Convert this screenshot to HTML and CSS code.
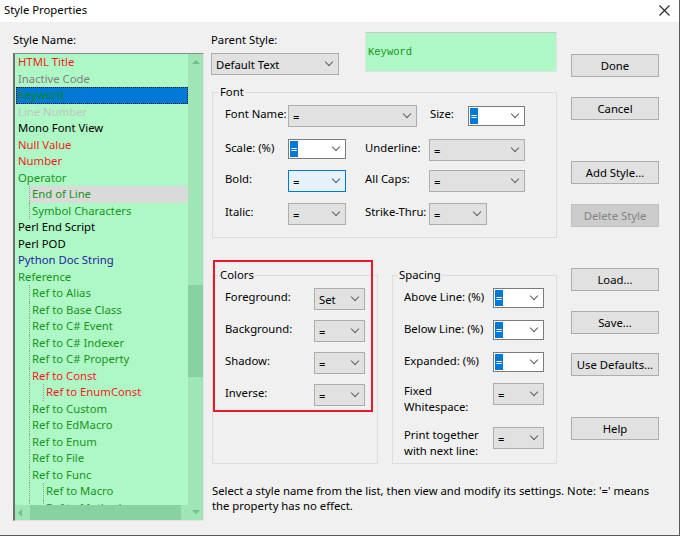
FILE: index.html
```html
<!DOCTYPE html>
<html lang="en">
<head>
  <meta charset="UTF-8">
  <title>Style Properties</title>
  <link rel="stylesheet" href="styles.css">
</head>
<body>
  <div class="dialog">
    <div class="titlebar">
      <span class="title">Style Properties</span>
      <svg class="close" width="11" height="11" viewBox="0 0 11 11">
        <path d="M0.5 0.5 L10.5 10.5 M10.5 0.5 L0.5 10.5" stroke="#222" stroke-width="1.1" fill="none"/>
      </svg>
    </div>

    <div class="main">
      <div class="left">
        <div class="lbl">Style Name:</div>
        <div class="list">
          <div class="items">
            <div class="item red">HTML Title</div>
            <div class="item gray">Inactive Code</div>
            <div class="item green selected">Keyword</div>
            <div class="item light">Line Number</div>
            <div class="item">Mono Font View</div>
            <div class="item red">Null Value</div>
            <div class="item red">Number</div>
            <div class="item green">Operator</div>
            <div class="item green lv1 inactive-sel">End of Line</div>
            <div class="item green lv1">Symbol Characters</div>
            <div class="item">Perl End Script</div>
            <div class="item">Perl POD</div>
            <div class="item blue">Python Doc String</div>
            <div class="item green">Reference</div>
            <div class="item green lv1">Ref to Alias</div>
            <div class="item green lv1">Ref to Base Class</div>
            <div class="item green lv1">Ref to C# Event</div>
            <div class="item green lv1">Ref to C# Indexer</div>
            <div class="item green lv1">Ref to C# Property</div>
            <div class="item red lv1">Ref to Const</div>
            <div class="item red lv2">Ref to EnumConst</div>
            <div class="item green lv1">Ref to Custom</div>
            <div class="item green lv1">Ref to EdMacro</div>
            <div class="item green lv1">Ref to Enum</div>
            <div class="item green lv1">Ref to File</div>
            <div class="item green lv1">Ref to Func</div>
            <div class="item green lv2">Ref to Macro</div>
            <div class="item green lv2">Ref to Method</div>
          </div>
          <div class="vscroll">
            <span class="arrow-up"></span>
            <div class="vthumb"></div>
            <span class="arrow-down"></span>
          </div>
          <div class="hscroll">
            <span class="arrow-left"></span>
            <div class="hthumb"></div>
          </div>
        </div>
      </div>

      <div class="right">
        <div class="right-top">
          <div class="mid">
            <div class="top-row">
              <div class="parent">
                <div class="lbl">Parent Style:</div>
                <div class="combo"><span>Default Text</span></div>
              </div>
              <div class="preview">Keyword</div>
            </div>

            <fieldset class="group font-group">
              <legend>Font</legend>
              <div class="frow r1">
                <span class="flabel">Font Name:</span>
                <div class="combo name-combo"><span>=</span></div>
                <span class="flabel size-label">Size:</span>
                <div class="combo white size-combo"><span class="hl">=</span></div>
              </div>
              <div class="frow r2">
                <span class="flabel">Scale: (%)</span>
                <div class="combo white small"><span class="hl">=</span></div>
                <span class="flabel flabel2">Underline:</span>
                <div class="combo wide"><span>=</span></div>
              </div>
              <div class="frow r3">
                <span class="flabel">Bold:</span>
                <div class="combo focus small"><span>=</span></div>
                <span class="flabel flabel2">All Caps:</span>
                <div class="combo wide"><span>=</span></div>
              </div>
              <div class="frow">
                <span class="flabel">Italic:</span>
                <div class="combo small"><span>=</span></div>
                <span class="flabel flabel2">Strike-Thru:</span>
                <div class="combo small"><span>=</span></div>
              </div>
            </fieldset>

            <div class="lower">
              <div class="colors-wrap">
                <fieldset class="group colors-group">
                  <legend>Colors</legend>
                  <div class="crow">
                    <span class="clabel">Foreground:</span>
                    <div class="combo ccombo"><span>Set</span></div>
                  </div>
                  <div class="crow">
                    <span class="clabel">Background:</span>
                    <div class="combo ccombo"><span>=</span></div>
                  </div>
                  <div class="crow">
                    <span class="clabel">Shadow:</span>
                    <div class="combo ccombo"><span>=</span></div>
                  </div>
                  <div class="crow">
                    <span class="clabel">Inverse:</span>
                    <div class="combo ccombo"><span>=</span></div>
                  </div>
                </fieldset>
                <div class="highlight"></div>
              </div>

              <fieldset class="group spacing-group">
                <legend>Spacing</legend>
                <div class="srow">
                  <span class="clabel">Above Line: (%)</span>
                  <div class="combo white ccombo"><span class="hl">=</span></div>
                </div>
                <div class="srow">
                  <span class="clabel">Below Line: (%)</span>
                  <div class="combo white ccombo"><span class="hl">=</span></div>
                </div>
                <div class="srow">
                  <span class="clabel">Expanded: (%)</span>
                  <div class="combo white ccombo"><span class="hl">=</span></div>
                </div>
                <div class="srow two">
                  <span class="clabel">Fixed<br>Whitespace:</span>
                  <div class="combo ccombo"><span>=</span></div>
                </div>
                <div class="srow two last">
                  <span class="clabel">Print together<br>with next line:</span>
                  <div class="combo ccombo"><span>=</span></div>
                </div>
              </fieldset>
            </div>
          </div>

          <div class="buttons">
            <button class="btn b-done">Done</button>
            <button class="btn b-near">Cancel</button>
            <button class="btn b-far">Add Style...</button>
            <button class="btn b-near" disabled>Delete Style</button>
            <button class="btn b-far">Load...</button>
            <button class="btn b-near">Save...</button>
            <button class="btn b-tight">Use Defaults...</button>
            <button class="btn b-far">Help</button>
          </div>
        </div>

        <p class="note">Select a style name from the list, then view and modify its settings. Note: '=' means<br>the property has no effect.</p>
      </div>
    </div>
  </div>
</body>
</html>
```

FILE: styles.css
```css
body {
  margin: 0;
  font-family: "Noto Sans", sans-serif;
  font-size: 11.3px;
  color: #000;
  background: #fff;
}
.dialog {
  width: 680px;
  height: 536px;
  box-sizing: border-box;
  border-right: 1px solid #5a5a5a;
  border-bottom: 1px solid #5a5a5a;
  background: #f0f0f0;
  display: flex;
  flex-direction: column;
}
.titlebar {
  height: 22px;
  flex-shrink: 0;
  background: #fff;
  display: flex;
  align-items: center;
  justify-content: space-between;
  padding: 0 9px 0 4px;
}
.title {
  line-height: 16px;
  margin-top: -3px;
}
.close {
  margin-top: -2px;
}
.main {
  display: flex;
  padding: 10px 0 0 13px;
}
.left {
  width: 191px;
}
.lbl {
  line-height: 16px;
  margin-bottom: 5px;
}

/* style list */
.list {
  height: 468px;
  box-sizing: border-box;
  border-top: 1px solid #8a8a8a;
  border-left: 2px solid #6e6e6e;
  border-right: 1px solid #e3e3e3;
  border-bottom: 1px solid #e3e3e3;
  background: #aef8c6;
  display: grid;
  grid-template-columns: 1fr 15px;
  grid-template-rows: 1fr 15px;
}
.items {
  grid-row: 1;
  grid-column: 1;
  overflow: hidden;
  padding-left: 1px;
}
.item {
  position: relative;
  height: 16.5px;
  line-height: 16.5px;
  padding-left: 2px;
  white-space: nowrap;
}
.item.red { color: #f01c1c; }
.item.gray { color: #808080; }
.item.light { color: #c4c4c4; }
.item.green { color: #17951a; }
.item.blue { color: #2424a0; }
.item.selected {
  background: #0078d7;
  color: #0c8a10;
  outline: 1px dotted #1a1a1a;
  outline-offset: -1px;
}
.item.inactive-sel {
  background: #dadada;
}
.item.lv1 {
  margin-left: 14px;
}
.item.lv2 {
  margin-left: 28px;
}
.item.lv1::before,
.item.lv2::before {
  content: "";
  position: absolute;
  left: -1px;
  top: 0;
  bottom: 0;
  border-left: 1px dotted #9a9a9a;
}
.item.lv2::after {
  content: "";
  position: absolute;
  left: -15px;
  top: 0;
  bottom: 0;
  border-left: 1px dotted #9a9a9a;
}
.vscroll {
  grid-column: 2;
  grid-row: 1 / 3;
  background: #9fe5b5;
  display: flex;
  flex-direction: column;
  align-items: center;
}
.arrow-up {
  width: 0;
  height: 0;
  border-left: 4px solid transparent;
  border-right: 4px solid transparent;
  border-bottom: 4px solid #72c08c;
  margin-top: 6px;
}
.vthumb {
  width: 100%;
  height: 92px;
  margin-top: 221px;
  background: #88d1a0;
}
.arrow-down {
  width: 0;
  height: 0;
  border-left: 4px solid transparent;
  border-right: 4px solid transparent;
  border-top: 4px solid #72c08c;
  margin-top: auto;
  margin-bottom: 6px;
}
.hscroll {
  grid-row: 2;
  grid-column: 1;
  background: #9fe5b5;
  display: flex;
  align-items: center;
}
.arrow-left {
  width: 0;
  height: 0;
  border-top: 4px solid transparent;
  border-bottom: 4px solid transparent;
  border-right: 4px solid #72c08c;
  margin-left: 3px;
}
.hthumb {
  width: 151px;
  height: 15px;
  margin-left: 8px;
  background: #88d1a0;
}

/* right side */
.right {
  margin-left: 7px;
  display: flex;
  flex-direction: column;
}
.right-top {
  display: flex;
}
.mid {
  width: 346px;
}
.top-row {
  display: flex;
  justify-content: space-between;
  height: 43px;
}
.parent {
  width: 128px;
}
.preview {
  width: 192px;
  height: 40px;
  box-sizing: border-box;
  border: 1px solid #e2e2e2;
  border-top-color: #c9c9c9;
  background: #aef8c6;
  display: flex;
  align-items: center;
  padding-left: 2px;
  font-family: "Liberation Mono", monospace;
  font-size: 10.5px;
  color: #159515;
}

/* combo boxes */
.combo {
  height: 22px;
  box-sizing: border-box;
  border: 1px solid #adadad;
  background: #e1e1e1;
  display: flex;
  align-items: center;
  padding: 0 6px 0 4px;
  flex-shrink: 0;
}
.combo::after {
  content: "";
  width: 5px;
  height: 5px;
  border-right: 1px solid #5f5f5f;
  border-bottom: 1px solid #5f5f5f;
  transform: rotate(45deg);
  margin: -4px 0 0 auto;
}
.combo.white {
  height: 20px;
  background: #fff;
  border-color: #7a7a7a;
  padding-left: 1px;
}
.combo.focus {
  background: #e5f1fb;
  border-color: #0078d7;
}
.combo .hl {
  width: 8px;
  height: 16px;
  line-height: 16px;
  text-align: center;
  background: #0078d7;
  color: #fff;
}
.name-combo { width: 129px; }
.size-combo { width: 57px; margin-top: 1px; }
.small { width: 58px; }
.wide { width: 96px; }
.ccombo { width: 51px; }

/* group boxes */
.group {
  box-sizing: border-box;
  margin: 0;
  border: 1px solid #dcdcdc;
  min-width: 0;
}
.group legend {
  line-height: 16px;
  padding: 0 1px;
  margin-left: -6px;
}
.font-group {
  width: 345px;
  margin: 9px 0 0 1px;
  padding: 5px 12px 12px;
}
.frow {
  display: flex;
  align-items: flex-start;
  height: 22px;
  margin-bottom: 11px;
}
.frow.r1 { margin-bottom: 12px; }
.frow.r2 { margin-bottom: 9px; }
.frow:last-child { margin-bottom: 0; }
.flabel {
  width: 63px;
  line-height: 16px;
  padding-top: 1px;
  flex-shrink: 0;
  white-space: nowrap;
}
.flabel2 {
  width: 64px;
  margin-left: 19px;
}
.size-label {
  width: 38px;
  margin-left: 13px;
}
.lower {
  display: flex;
  margin: 29px 0 0 1px;
}
.colors-wrap {
  position: relative;
}
.colors-group,
.spacing-group {
  width: 166px;
  height: 197px;
  padding: 5px 12px 0;
}
.spacing-group {
  margin-left: 14px;
  padding-left: 11px;
}
.highlight {
  position: absolute;
  left: 1px;
  top: -7px;
  width: 160px;
  height: 152px;
  box-sizing: border-box;
  border: 2px solid #e8192c;
}
.crow,
.srow {
  display: flex;
  align-items: flex-start;
  height: 22px;
  margin-bottom: 10px;
}
.clabel {
  width: 89px;
  line-height: 16px;
  padding-top: 1px;
  flex-shrink: 0;
  white-space: nowrap;
}
.srow.two {
  height: 30px;
  margin: -1px 0 14px;
}
.srow.two .clabel {
  line-height: 15.5px;
  padding-top: 0;
}
.srow.last {
  margin-top: 0;
}

/* buttons */
.buttons {
  width: 88px;
  margin-left: 14px;
  display: flex;
  flex-direction: column;
}
.btn {
  height: 23px;
  box-sizing: border-box;
  border: 1px solid #adadad;
  background: #e1e1e1;
  font-family: inherit;
  font-size: 11.3px;
  color: #000;
  padding: 0;
  margin-top: 20px;
}
.btn:disabled {
  background: #cccccc;
  border-color: #bfbfbf;
  color: #838383;
}
.b-done { margin-top: 22px; }
.b-far { margin-top: 41px; }
.b-tight { margin-top: 19px; }
.note {
  margin: 19px 0 0 1px;
  line-height: 15px;
  white-space: nowrap;
}
```
